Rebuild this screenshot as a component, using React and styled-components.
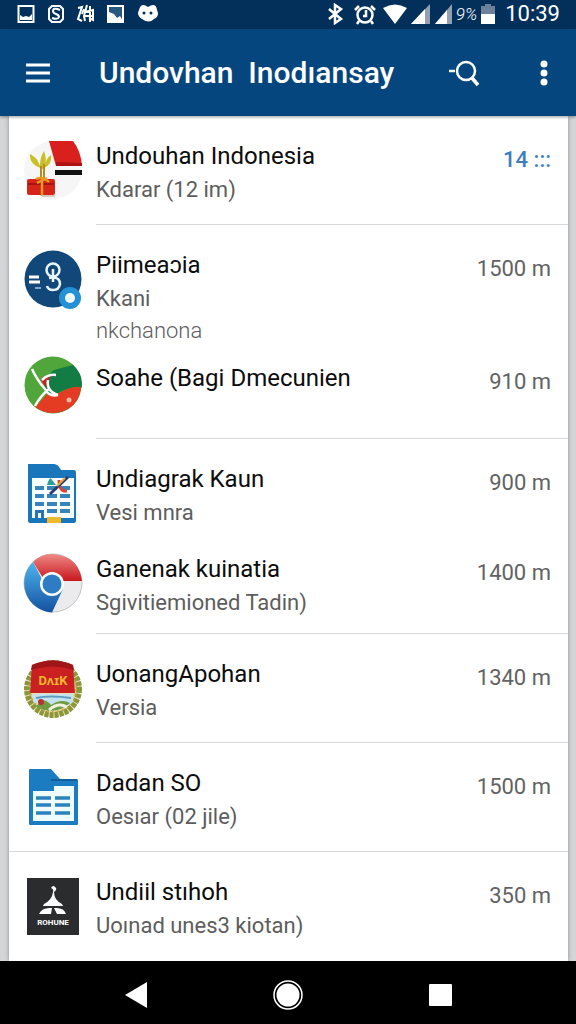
import React from 'react';
import styled, { createGlobalStyle } from 'styled-components';

const GlobalStyle = createGlobalStyle`
  * {
    box-sizing: border-box;
  }

  body {
    margin: 0;
    background-color: #d3d5d6;
    font-family: Roboto, 'Liberation Sans', sans-serif;
  }
`;

const Screen = styled.div`
  display: flex;
  flex-direction: column;
  min-height: 100vh;
`;

const StatusBar = styled.div`
  display: flex;
  align-items: center;
  justify-content: space-between;
  height: 29px;
  padding: 0 16px;
  background-color: #03305b;
  color: #fff;
`;

const StatusGroup = styled.div`
  display: flex;
  align-items: center;
  gap: ${(props) => props.$gap}px;
  padding-bottom: 2px;
`;

const Percent = styled.span`
  font-size: 17px;
  font-style: italic;
  font-weight: 300;
`;

const Clock = styled.span`
  margin-left: 6px;
  font-size: 22px;
  line-height: 26px;
`;

const AppBar = styled.header`
  display: flex;
  align-items: center;
  height: 87px;
  padding: 0 16px 0 18px;
  background-color: #06467f;
  color: #fff;
  box-shadow: 0 1px 3px rgba(0, 0, 0, 0.4);
  z-index: 1;
`;

const IconButton = styled.button`
  display: flex;
  align-items: center;
  justify-content: center;
  width: 40px;
  height: 40px;
  padding: 0;
  border: none;
  background: none;
  color: #fff;
  cursor: pointer;
`;

const Title = styled.h1`
  flex-grow: 1;
  margin: 0 0 0 41px;
  font-size: 30px;
  font-weight: 500;
  line-height: 40px;
  white-space: pre;
`;

const Actions = styled.div`
  display: flex;
  gap: 40px;
  margin-right: -4px;
`;

const List = styled.ul`
  flex-grow: 1;
  margin: 0 8px 0 9px;
  padding: 0;
  background-color: #fff;
  box-shadow: 0 0 4px rgba(0, 0, 0, 0.35);
  list-style: none;
`;

const line = '1px solid #d6d7d8';

const Row = styled.li`
  display: flex;
  padding-left: 14px;
  border-bottom: ${(props) => (props.$divider === 'full' ? line : 'none')};
`;

const RowIcon = styled.div`
  flex-shrink: 0;
  width: 60px;
  height: 60px;
  margin-top: ${(props) => props.$top}px;
  margin-right: 13px;
`;

const RowBody = styled.div`
  display: flex;
  flex-grow: 1;
  justify-content: space-between;
  min-height: ${(props) => props.$top + 61 + props.$bottom}px;
  padding: ${(props) => `${props.$top}px 17px ${props.$bottom}px 0`};
  border-bottom: ${(props) => (props.$divider === 'inset' ? line : 'none')};
`;

const Name = styled.div`
  color: #0c0c0c;
  font-size: 24px;
  line-height: 36px;
`;

const Detail = styled.div`
  color: #5d5d5d;
  font-size: 22px;
  font-weight: ${(props) => (props.$light ? 300 : 400)};
  line-height: 32px;
`;

const Amount = styled.div`
  padding-top: 6px;
  color: ${(props) => (props.$active ? '#3d7fbd' : '#626262')};
  font-size: 22px;
  font-weight: ${(props) => (props.$active ? 500 : 400)};
  line-height: 32px;
  white-space: nowrap;
`;

const NavBar = styled.nav`
  display: flex;
  align-items: center;
  justify-content: center;
  gap: 112px;
  height: 63px;
  padding-top: 4px;
  background-color: #000;
  z-index: 1;
`;

const GiftIcon = () => (
  <svg width="60" height="60" viewBox="0 0 60 60">
    <circle cx="30" cy="30" r="29" fill="#f6f6f6" />
    <path d="M26 1h24q8 10 9 25H33z" fill="#d8201d" />
    <path d="M33 22l26 1v3H33z" fill="#ad1114" />
    <path d="M32 30h27v5H32z" fill="#111" />
    <path d="M18 28q-12-4-11-14 7 3 10 12 0-9 4-15 3 8 1 14 2-8 6-10 2 9-8 14z" fill="#c9bf27" />
    <path d="M18 26v16M21 24v18" stroke="#b88a20" strokeWidth="2" />
    <rect x="4" y="39" width="28" height="16" rx="2" fill="#d6241b" />
    <path d="M5 44h26" stroke="#a71513" strokeWidth="2" />
    <path d="M19 37v19M13 39q6-3 13 3M14 43l10-5" stroke="#e59a22" strokeWidth="2.5" fill="none" />
    <path d="M19 55h13v2H19z" fill="#dbc8bb" />
  </svg>
);

const PersonIcon = () => (
  <svg width="60" height="60" viewBox="0 0 60 60">
    <circle cx="30" cy="30" r="28.5" fill="#124779" />
    <path d="M6 28h10M6 33h11" stroke="#fff" strokeWidth="3" />
    <path d="M12 39h6" stroke="#7fa9cc" strokeWidth="2" />
    <circle cx="30" cy="21" r="6.5" fill="none" stroke="#e9f4fc" strokeWidth="2.5" />
    <path d="M30 20v13M26 29q11-2 11 6-1 6-7 6-5 0-6-4" fill="none" stroke="#e9f4fc" strokeWidth="2.5" />
    <circle cx="47" cy="49" r="11" fill="#2591d5" />
    <circle cx="47" cy="49" r="5" fill="#edfaff" />
  </svg>
);

const GlobeIcon = () => (
  <svg width="60" height="60" viewBox="0 0 60 60">
    <circle cx="30" cy="30" r="28.5" fill="#50a63a" />
    <path d="M24 39Q17 25 31 15q11-3 19-5 11 10 8.500 23-14-1-23 5-5 3-11 1z" fill="#137c45" />
    <path d="M12 52q8-8 12-13 11 1 18-4 8-4 16-3-1 15-13 22-17 9-33-2z" fill="#e33c22" />
    <path d="M18 24q2-4 10-3-4 4-2 12-6-2-8-9z" fill="#c22428" />
    <path d="M9 14q5 11 13 20 4 8 13 6M12 51q6-11 14-17M33 20q-8-1-14 5M25 25q-2 11 10 15" fill="none" stroke="#fff" strokeWidth="2.5" />
    <circle cx="46" cy="45" r="2.500" fill="#f7b5a5" />
  </svg>
);

const SheetIcon = () => (
  <svg width="60" height="60" viewBox="0 0 60 60">
    <path d="M5 1h26q4 0 7 6h13q2 0 2 3v48q0 2-2 2H7q-2 0-2-2z" fill="#1976bb" />
    <path d="M9 15h42v40H9z" fill="#f7fdff" />
    <path d="M12 25h9M12 33h9M12 41h9M24 25h10M24 33h10M24 41h10M24 48h10M37 25h10M37 33h10M37 41h10M37 48h10" stroke="#3684ba" strokeWidth="4" />
    <path d="M12 47h9v8h-3v-5h-3v5h-3z" fill="#2774ae" />
    <path d="M24 22q3-10 5-5l4 5z" fill="#2a9e9b" />
    <path d="M36 17q0 12 8 11" stroke="#d6453a" strokeWidth="3" fill="none" />
    <path d="M27 31l18-17" stroke="#263d70" strokeWidth="3" />
    <path d="M34 23l8-8" stroke="#e8a63c" strokeWidth="2" />
    <path d="M24 54h14v6H24z" fill="#edb928" />
  </svg>
);

const BrowserIcon = () => (
  <svg width="60" height="60" viewBox="0 0 60 60">
    <defs>
      <linearGradient id="blue" x1="0" y1="0" x2="0" y2="1">
        <stop offset="0" stopColor="#4fb4ec" />
        <stop offset="1" stopColor="#1451a1" />
      </linearGradient>
      <linearGradient id="red" x1="0" y1="0" x2="0" y2="1">
        <stop offset="0" stopColor="#ee8a86" />
        <stop offset="1" stopColor="#c8161c" />
      </linearGradient>
    </defs>
    <circle cx="30" cy="30" r="29" fill="#ebebed" stroke="#bfc2c6" />
    <path d="M10 9Q20-1 34 1.500 56 5 59 28H30L20 25z" fill="url(#red)" />
    <path d="M10 9A29.500 29.500 0 0 0 29 59.500L40 36 20 28z" fill="url(#blue)" />
    <circle cx="29" cy="31" r="12" fill="#fff" />
    <circle cx="29" cy="31" r="9.500" fill="#2e7cc3" />
  </svg>
);

const CrestIcon = () => (
  <svg width="60" height="60" viewBox="0 0 60 60">
    <circle cx="30" cy="31" r="28" fill="#e4ddb5" />
    <circle cx="30" cy="31" r="26" fill="none" stroke="#8b9639" strokeWidth="6" strokeDasharray="4 1" />
    <circle cx="30" cy="31" r="23" fill="none" stroke="#c8a53e" strokeWidth="2" strokeDasharray="2 3" />
    <path d="M10 36h40v8q-12 12-40 0z" fill="#c4e2ee" />
    <path d="M13 40q14-3 35 0" stroke="#5d9ac2" strokeWidth="2" fill="none" />
    <path d="M13 49q7-12 15-2 10-7 19-2-14 13-34 4z" fill="#6f9c43" />
    <path d="M26 52q9-8 18-3" stroke="#eef3df" strokeWidth="3" fill="none" />
    <circle cx="18" cy="44" r="3" fill="#ba3030" />
    <path d="M9 7q21-9 41 0l2 28H7z" fill="#ca2022" />
    <path d="M9 7q21-9 41 0l1 5q-21-7-43 0z" fill="#a01518" />
    <text x="30" y="27" textAnchor="middle" fontSize="13" fontWeight="700" fill="#f7b52d">DʌɪK</text>
  </svg>
);

const DocIcon = () => (
  <svg width="60" height="60" viewBox="0 0 60 60">
    <path d="M7 2h21l9 10h17q1 0 1 2v43q0 1-1 1H7q-1 0-1-1V3q0-1 1-1z" fill="#1b7cc1" />
    <path d="M28 12h26v2H28z" fill="#115f9f" />
    <path d="M10 24h21v-5h20v35H10z" fill="#effcff" />
    <path d="M13 31h15M13 38h15M13 46h15M32 31h15M32 38h15M32 46h15" stroke="#2b83bd" strokeWidth="3.500" />
  </svg>
);

const BadgeIcon = () => (
  <svg width="60" height="60" viewBox="0 0 60 60">
    <path d="M4 2h52v57H4z" fill="#2b2c2e" />
    <path d="M28 12q2-4 5 0 1 2-2 4 0 8 8 12l1 2H20l1-2q8-4 9-12 1-3-2-4z" fill="#fff" />
    <path d="M16 38q3-7 13-6l-1 6zM31 32q10-1 12 6H34z" fill="#fff" />
    <text x="30" y="49" textAnchor="middle" fontSize="8" fontWeight="700" fill="#fff">ROHUNE</text>
  </svg>
);

const items = [
  { name: 'Undouhan Indonesia', details: ['Kdarar (12 im)'], amount: '14 :::', active: true, icon: GiftIcon, divider: 'inset' },
  { name: 'Piimeaɔia', details: ['Kkani', 'nkchanona'], amount: '1500 m', icon: PersonIcon, bottom: 0 },
  { name: 'Soahe (Bagi Dmecunien', details: [], amount: '910 m', icon: GlobeIcon, divider: 'inset', top: 13 },
  { name: 'Undiagrak Kaun', details: ['Vesi mnra'], amount: '900 m', icon: SheetIcon, bottom: 0 },
  { name: 'Ganenak kuinatia', details: ['Sgivitiemioned Tadin)'], amount: '1400 m', icon: BrowserIcon, divider: 'inset', bottom: 14 },
  { name: 'UonangApohan', details: ['Versia'], amount: '1340 m', icon: CrestIcon, divider: 'inset' },
  { name: 'Dadan SO', details: ['Oesıar (02 jile)'], amount: '1500 m', icon: DocIcon, divider: 'full' },
  { name: 'Undiil stıhoh', details: ['Uoınad unes3 kiotan)'], amount: '350 m', icon: BadgeIcon },
];

function StatusIcons() {
  return (
    <StatusGroup $gap={11}>
      <svg width="20" height="20" viewBox="0 0 20 20">
        <path d="M2.500 2h15v16h-15z" fill="none" stroke="#fff" strokeWidth="2" />
        <path d="M4 16v-5l3 2 3-1 3 1 3-3v6z" fill="#fff" />
      </svg>
      <svg width="18" height="20" viewBox="0 0 18 20">
        <path d="M5 2h8l3 3v10l-3 3H5l-3-3V5z" fill="none" stroke="#fff" strokeWidth="2" />
        <path d="M13 6q-7-3-7 1 0 2 3 3t3 3q-1 3-7 1" fill="none" stroke="#fff" strokeWidth="2" />
      </svg>
      <svg width="19" height="20" viewBox="0 0 19 20" fill="none" stroke="#fff" strokeWidth="2">
        <path d="M2 4l4-1-4 12 4 2M8 5l-2 5M11 1L8 12l1 5M9 8l8-2v10l-4-2M14 2v16M9 12h9" />
      </svg>
      <svg width="19" height="20" viewBox="0 0 19 20">
        <path d="M2 2h15v16H2z" fill="#28577f" stroke="#fff" strokeWidth="2" />
        <path d="M3 8l5 2 3 4 3-2 3 5H3z" fill="#fff" />
      </svg>
      <svg width="24" height="20" viewBox="0 0 24 20">
        <path d="M12 3q8-5 9 3 3 6-3 9-5 5-12 0-6-4-3-9 2-8 9-3z" fill="#fff" />
        <circle cx="8" cy="9" r="1.500" fill="#03305b" />
        <circle cx="15" cy="9" r="1.500" fill="#03305b" />
      </svg>
    </StatusGroup>
  );
}

function SystemIcons() {
  return (
    <StatusGroup $gap={4}>
      <svg width="24" height="22" viewBox="0 0 24 22" fill="none" stroke="#fff" strokeWidth="2.500">
        <path d="M4 6l12 10-6 4V2l6 4L4 16" />
      </svg>
      <svg width="26" height="22" viewBox="0 0 26 22" fill="none" stroke="#fff" strokeWidth="2.500">
        <circle cx="12" cy="12" r="7.500" />
        <path d="M2 7l4-4M22 7l-4-4M6 18l-2 3M18 18l2 3M13 7v6h-3" />
      </svg>
      <svg width="24" height="22" viewBox="0 0 24 22">
        <path d="M0 5q12-7 24 0L12 21z" fill="#fff" />
      </svg>
      <svg width="19" height="22" viewBox="0 0 19 22">
        <path d="M19 1v20H0z" fill="#929fae" />
        <path d="M14 6v15H0z" fill="#fff" />
      </svg>
      <svg width="18" height="22" viewBox="0 0 18 22">
        <path d="M18 1v20H1z" fill="#929fae" />
        <path d="M13 7v14H1z" fill="#fff" />
      </svg>
      <Percent>9%</Percent>
      <svg width="14" height="22" viewBox="0 0 14 22">
        <path d="M4 1h6v2h4v9H0V3h4z" fill="#6d8198" />
        <path d="M0 11h14v10H0z" fill="#fff" />
      </svg>
      <Clock>10:39</Clock>
    </StatusGroup>
  );
}

function ListRow({ item }) {
  const { name, details, amount, active, divider, icon: Icon, top = 22, bottom = 18 } = item;
  // single line rows keep the icon closer to the name
  const iconTop = details.length ? top + 2 : top - 5;

  return (
    <Row $divider={divider}>
      <RowIcon $top={iconTop}>
        <Icon />
      </RowIcon>
      <RowBody $top={top} $bottom={bottom} $divider={divider}>
        <div>
          <Name>{name}</Name>
          {details.map((detail, index) => (
            <Detail key={detail} $light={index > 0}>
              {detail}
            </Detail>
          ))}
        </div>
        <Amount $active={active}>{amount}</Amount>
      </RowBody>
    </Row>
  );
}

function App() {
  return (
    <Screen>
      <GlobalStyle />
      <StatusBar>
        <StatusIcons />
        <SystemIcons />
      </StatusBar>
      <AppBar>
        <IconButton aria-label="Menu">
          <svg width="26" height="22" viewBox="0 0 26 22" stroke="#fff" strokeWidth="3">
            <path d="M1 3h24M1 11h24M1 19h24" />
          </svg>
        </IconButton>
        <Title>{'Undovhan  Inodıansay'}</Title>
        <Actions>
          <IconButton aria-label="Cari">
            <svg width="32" height="30" viewBox="0 0 32 30" fill="none" stroke="#fff" strokeWidth="2.500">
              <circle cx="18" cy="13" r="9" />
              <path d="M24 20l6 7" strokeWidth="3.500" />
              <path d="M1 13h6" />
            </svg>
          </IconButton>
          <IconButton aria-label="Opsi lainnya">
            <svg width="8" height="28" viewBox="0 0 8 28" fill="#fff">
              <circle cx="4" cy="5" r="3.500" />
              <circle cx="4" cy="14" r="3.500" />
              <circle cx="4" cy="23" r="3.500" />
            </svg>
          </IconButton>
        </Actions>
      </AppBar>
      <List>
        {items.map((item) => (
          <ListRow key={item.name} item={item} />
        ))}
      </List>
      <NavBar>
        <IconButton aria-label="Kembali">
          <svg width="24" height="28" viewBox="0 0 24 28">
            <path d="M23 1v26L1 14z" fill="#fff" />
          </svg>
        </IconButton>
        <IconButton aria-label="Beranda">
          <svg width="30" height="30" viewBox="0 0 30 30">
            <circle cx="15" cy="15" r="14" fill="none" stroke="#fff" strokeWidth="1.500" />
            <circle cx="15" cy="15" r="11.500" fill="#fff" />
          </svg>
        </IconButton>
        <IconButton aria-label="Terbaru">
          <svg width="24" height="24" viewBox="0 0 24 24">
            <rect x="1" y="1" width="23" height="22" rx="1" fill="#fff" />
          </svg>
        </IconButton>
      </NavBar>
    </Screen>
  );
}

export default App;
